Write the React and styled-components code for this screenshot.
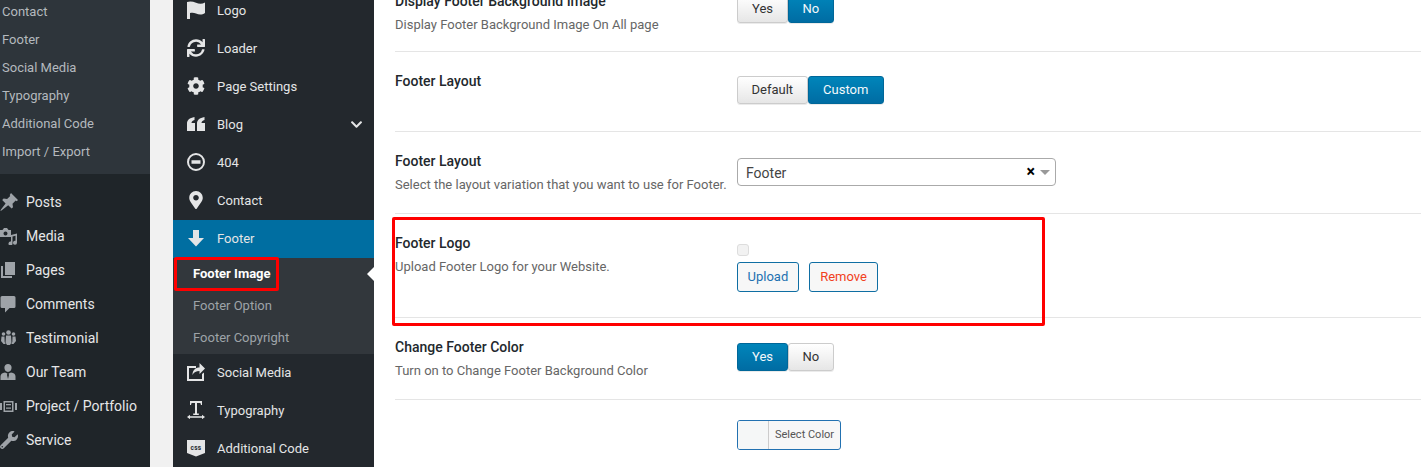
import React from 'react';
import styled, { createGlobalStyle } from 'styled-components';
import { FaWrench, FaSync, FaCog, FaMapMarkerAlt, FaChevronDown } from 'react-icons/fa';

const GlobalStyle = createGlobalStyle`
  html, body { margin: 0; padding: 0; height: 100%; overflow: hidden; background: #fff; }
  body { font-family: Roboto, "Liberation Sans", sans-serif; }
  * { box-sizing: border-box; }
`;

const Page = styled.div`
  position: relative;
  display: flex;
  width: 1421px;
  height: 467px;
  overflow: hidden;
`;

const AdminMenu = styled.nav`
  width: 150px;
  flex: none;
  background: #1f2529;
  overflow: hidden;
`;

const AdminSub = styled.div`
  background: #2e353b;
  height: 174px;
  margin-bottom: 11px;
`;

const AdminSubItem = styled.div`
  height: 28px;
  line-height: 23px;
  padding-left: 2px;
  font-size: 13px;
  color: #b4b9be;
`;

const AdminItem = styled.div`
  display: flex;
  align-items: center;
  height: 34px;
  font-size: 14px;
  color: #e6e7e8;
  white-space: nowrap;
`;

const AdminIcon = styled.span`
  display: flex;
  justify-content: center;
  width: 18px;
  margin-right: 8px;
  font-size: 18px;
  color: #9ea3a8;
`;

const Gutter = styled.div`
  width: 23px;
  flex: none;
  background: #f1f1f1;
`;

const OptionsMenu = styled.nav`
  width: 201px;
  flex: none;
  background: #23282d;
  overflow: hidden;
`;

const MenuItem = styled.div`
  display: flex;
  align-items: center;
  height: 38px;
  padding: ${p => (p.$active ? '0 11px 2px 14px' : '0 11px 0 14px')};
  margin-top: ${p => (p.$active ? '1px' : '0')};
  font-size: 13px;
  color: #e4e5e6;
  background: ${p => (p.$active ? '#006ea1' : 'transparent')};
  &:first-child { margin-top: -9px; }
`;

const MenuIcon = styled.span`
  display: flex;
  justify-content: center;
  width: 18px;
  margin-right: 12px;
  font-size: 18px;
  color: #e4e5e6;
`;

const Chevron = styled.span`
  display: flex;
  margin-left: auto;
  font-size: 13px;
`;

const SubMenu = styled.div`
  background: #32373c;
  height: 96px;
  margin-bottom: -1px;
`;

const SubItem = styled.div`
  position: relative;
  height: 32px;
  line-height: 31px;
  padding-left: 20px;
  font-size: 13px;
  font-weight: ${p => (p.$current ? 700 : 400)};
  color: ${p => (p.$current ? '#fff' : '#9ea3a8')};
`;

const CurrentArrow = styled.span`
  position: absolute;
  right: 0;
  top: 9px;
  border: 7px solid transparent;
  border-right-color: #fff;
  border-left-width: 0;
`;

const Content = styled.main`
  flex: 1;
  padding-left: 21px;
  margin-top: -29px;
`;

const Row = styled.section`
  display: grid;
  grid-template-columns: 342px 1fr;
  height: ${p => p.$h}px;
  border-bottom: ${p => (p.$last ? 'none' : '1px solid #e5e5e5')};
  padding-top: ${p => p.$top}px;
`;

const Text = styled.div`
  padding-top: 1px;
`;

const Title = styled.h3`
  margin: 0 0 7px;
  font-size: 14px;
  line-height: 18px;
  font-weight: 500;
  color: #23282d;
`;

const Desc = styled.p`
  margin: 0;
  font-size: 13px;
  line-height: 16px;
  color: #666;
  white-space: nowrap;
`;

const Control = styled.div`
  padding-top: ${p => p.$top || 0}px;
`;

const Toggle = styled.div`
  display: inline-flex;
  height: 28px;
`;

const ToggleButton = styled.button`
  height: 28px;
  padding: 0 ${p => p.$pad || 14}px 1px;
  font: 13px Roboto, sans-serif;
  border-radius: 3px;
  border: 1px solid ${p => (p.$on ? '#006799' : '#ccc')};
  color: ${p => (p.$on ? '#f4f8fb' : '#333')};
  background: ${p => (p.$on
    ? 'linear-gradient(#0085ba, #006ca3)'
    : 'linear-gradient(#fff, #e6e6e6)')};
  box-shadow: 0 1px 0 rgba(0, 0, 0, 0.08);
`;

const Select = styled.div`
  display: flex;
  align-items: center;
  width: 319px;
  height: 28px;
  padding: 0 5px 0 8px;
  border: 1px solid #aaa;
  border-radius: 4px;
  font-size: 14px;
  color: #444;
`;

const SelectValue = styled.span`
  padding-top: 2px;
`;

const Clear = styled.span`
  margin-left: auto;
  font-size: 16px;
  line-height: 1;
  font-weight: 700;
  color: #000;
`;

const Caret = styled.span`
  margin-left: 5px;
  border: 5px solid transparent;
  border-top-color: #999;
  border-bottom-width: 0;
`;

const Check = styled.span`
  display: block;
  width: 12px;
  height: 12px;
  margin-bottom: 6px;
  background: #f2f2f2;
  border: 1px solid #ddd;
  border-radius: 3px;
`;

const Actions = styled.div`
  display: flex;
  gap: 10px;
`;

const OutlineButton = styled.button`
  height: 30px;
  padding: 0 ${p => p.$pad || 10}px 1px;
  font: 13px Roboto, sans-serif;
  background: #f7f7f7;
  border: 1px solid #0f6ea3;
  border-radius: 3px;
  color: ${p => p.$color || '#2271b1'};
`;

const ColorButton = styled.div`
  display: inline-flex;
  height: 30px;
  background: #f7f7f7;
  border: 1px solid #2271b1;
  border-radius: 3px;
  overflow: hidden;
`;

const Swatch = styled.span`
  width: 31px;
  background: #f5f7f7;
  border-right: 1px solid #ccc;
`;

const ColorLabel = styled.span`
  padding: 0 6px;
  font-size: 11px;
  line-height: 28px;
  color: #555;
`;

const Callout = styled.div`
  position: absolute;
  left: ${p => p.$x}px;
  top: ${p => p.$y}px;
  width: ${p => p.$w}px;
  height: ${p => p.$h}px;
  border: 3px solid #f00;
  border-radius: 2px;
  pointer-events: none;
`;

const Svg = styled.svg`
  display: block;
  width: 1em;
  height: 1em;
  fill: currentColor;
`;

const Icon = ({ d, box = 18, children }) => (
  <Svg viewBox={`0 0 ${box} ${box}`}>
    {d && <path fillRule="evenodd" d={d} />}
    {children}
  </Svg>
);

const PinIcon = () => <Icon d="M11 0l7 7-1.3 1.2-1-.6-3.2 3.2.5 3.4-1.4 1.4-3.4-3.4L1.5 17.5.4 18l.4-1.2 4.8-6.4L2.2 7l1.4-1.4 3.5.5 3.1-3.2-.5-1z" />;
const MediaIcon = () => (
  <Icon>
    <path fillRule="evenodd" d="M1 4h2.5L5 2h3l1.5 2H12v7H1zm5.5 1.6a2 2 0 1 0 0 4 2 2 0 0 0 0-4z" transform="translate(-1 -1)" />
    <path d="M11 7.5l6-1.5v9.2a2 2 0 1 1-1.5-1.9V8.2L12.5 9v7a2 2 0 1 1-1.5-1.9z" transform="translate(0 .5)" />
  </Icon>
);
const PagesIcon = () => <Icon d="M5 1h10v13H5zM1 5h2v10h9v2H1z" />;
const CommentIcon = () => <Icon d="M2 1h12a1.500 1.500 0 0 1 1.500 1.500v9A1.500 1.500 0 0 1 14 13H9.500L5 17.500V13H2A1.500 1.500 0 0 1 .5 11.500v-9A1.500 1.500 0 0 1 2 1z" />;
const PeopleIcon = () => (
  <Icon>
    <circle cx="8.500" cy="3.500" r="2.300" />
    <circle cx="3.500" cy="5" r="1.800" />
    <circle cx="13.500" cy="5" r="1.800" />
    <path d="M6 6.500h5l.5 7-1.500 2.500H7l-1.500-2.500zM1.500 7.500h3l.2 5.500 1 2H3.500l-2.500-3zM12.500 7.500h3l.5 4.500-2.500 3h-2.200l1-2z" />
  </Icon>
);
const TeamIcon = () => <Icon d="M8 1a3.600 3.600 0 0 1 3.600 3.800c0 2.200-1.500 4.200-3.600 4.200S4.400 7 4.400 4.800A3.600 3.600 0 0 1 8 1zM5 9.500l2.400 1L7 12l1 4h0l1-4-.4-1.500 2.400-1c3 .5 4.500 1.500 4.500 4V17H.500v-3.500c0-2.500 1.500-3.500 4.500-4z" />;
const ProjectIcon = () => <Icon d="M0 6h2v7H0zM15 6h2v7h-2zM3.500 4h10v11h-10zm1.500 1.500v8h7v-8zM6 7h5v1.200H6zM6 10.500h5v1.200H6z" />;
const FlagIcon = () => <Icon d="M0 1c3-1 6-.500 9 .800 3 1.200 6 1.500 9-.300v10.500c-3 2-6 1.800-9 .500-2.200-1-4-1-6-.500V18H0z" />;
const QuoteIcon = () => <Icon d="M0 16V8.500C0 5 2.500 3 7.500 2v3C5.500 5.500 4.500 6.500 4.500 8H8v8zM10 16V8.500C10 5 12.500 3 17.500 2v3c-2 .5-3 1.500-3 3H18v8z" />;
const NoEntryIcon = () => <Icon d="M9 0a9 9 0 1 0 0 18A9 9 0 0 0 9 0zm0 2a7 7 0 1 1 0 14A7 7 0 0 1 9 2zM4.500 7.200h9v3.600h-9z" />;
const DownIcon = () => <Icon d="M6 1h6v8h5l-8 8.500L1 9h5z" />;
const ShareIcon = () => <Icon d="M0 3h9v2H2v11h13v-5l2-1.500V18H0zM12.500 0L18 5.500 12.500 11V8C9 8 7 9 5.500 12c0-5 3-7.500 7-7.500z" />;
const TypeIcon = () => <Icon d="M3 0h12v4h-1l-.6-2H10v10.500h1.800V14H6.200v-1.500H8V2H4.600L4 4H3zM0 16l3-2.200v1.500h12v-1.500l3 2.200-3 2.200v-1.500H3v1.500z" />;

const CssIcon = () => (
  <Icon d="M0 1h18v13l-9 3.500L0 14z">
    <text x="9" y="10.500" textAnchor="middle" fontSize="6.500" fontWeight="700" letterSpacing=".3" fontFamily="Roboto, sans-serif" fill="#23282d">css</text>
  </Icon>
);

const adminSub = ['Contact', 'Footer', 'Social Media', 'Typography', 'Additional Code', 'Import / Export'];

const adminItems = [
  ['Posts', <PinIcon />],
  ['Media', <MediaIcon />],
  ['Pages', <PagesIcon />],
  ['Comments', <CommentIcon />],
  ['Testimonial', <PeopleIcon />],
  ['Our Team', <TeamIcon />],
  ['Project / Portfolio', <ProjectIcon />],
  ['Service', <FaWrench />]
];

export default function App() {
  return (
    <Page>
      <GlobalStyle />
      <AdminMenu>
        <AdminSub>
          {adminSub.map(label => <AdminSubItem key={label}>{label}</AdminSubItem>)}
        </AdminSub>
        {adminItems.map(([label, icon]) => (
          <AdminItem key={label}><AdminIcon>{icon}</AdminIcon>{label}</AdminItem>
        ))}
      </AdminMenu>
      <Gutter />
      <OptionsMenu>
        <MenuItem><MenuIcon><FlagIcon /></MenuIcon>Logo</MenuItem>
        <MenuItem><MenuIcon><FaSync /></MenuIcon>Loader</MenuItem>
        <MenuItem><MenuIcon><FaCog /></MenuIcon>Page Settings</MenuItem>
        <MenuItem>
          <MenuIcon><QuoteIcon /></MenuIcon>Blog
          <Chevron><FaChevronDown /></Chevron>
        </MenuItem>
        <MenuItem><MenuIcon><NoEntryIcon /></MenuIcon>404</MenuItem>
        <MenuItem><MenuIcon><FaMapMarkerAlt /></MenuIcon>Contact</MenuItem>
        <MenuItem $active><MenuIcon><DownIcon /></MenuIcon>Footer</MenuItem>
        <SubMenu>
          <SubItem $current>Footer Image<CurrentArrow /></SubItem>
          <SubItem>Footer Option</SubItem>
          <SubItem>Footer Copyright</SubItem>
        </SubMenu>
        <MenuItem><MenuIcon><ShareIcon /></MenuIcon>Social Media</MenuItem>
        <MenuItem><MenuIcon><TypeIcon /></MenuIcon>Typography</MenuItem>
        <MenuItem><MenuIcon><CssIcon /></MenuIcon>Additional Code</MenuItem>
      </OptionsMenu>
      <Content>
        <Row $h={81} $top={20}>
          <Text>
            <Title>Display Footer Background Image</Title>
            <Desc>Display Footer Background Image On All page</Desc>
          </Text>
          <Control $top={4}>
            <Toggle>
              <ToggleButton>Yes</ToggleButton>
              <ToggleButton $on $pad={13.5}>No</ToggleButton>
            </Toggle>
          </Control>
        </Row>
        <Row $h={80} $top={19}>
          <Text><Title>Footer Layout</Title></Text>
          <Control $top={5}>
            <Toggle>
              <ToggleButton $pad={13.5}>Default</ToggleButton>
              <ToggleButton $on $pad={14.5}>Custom</ToggleButton>
            </Toggle>
          </Control>
        </Row>
        <Row $h={82} $top={19}>
          <Text>
            <Title>Footer Layout</Title>
            <Desc>Select the layout variation that you want to use for Footer.</Desc>
          </Text>
          <Control $top={7}>
            <Select><SelectValue>Footer</SelectValue><Clear>×</Clear><Caret /></Select>
          </Control>
        </Row>
        <Row $h={104} $top={19}>
          <Text>
            <Title>Footer Logo</Title>
            <Desc>Upload Footer Logo for your Website.</Desc>
          </Text>
          <Control $top={11}>
            <Check />
            <Actions>
              <OutlineButton $pad={9.5}>Upload</OutlineButton>
              <OutlineButton $color="#f1401c" $pad={10.5}>Remove</OutlineButton>
            </Actions>
          </Control>
        </Row>
        <Row $h={82} $top={19}>
          <Text>
            <Title>Change Footer Color</Title>
            <Desc>Turn on to Change Footer Background Color</Desc>
          </Text>
          <Control $top={6}>
            <Toggle>
              <ToggleButton $on>Yes</ToggleButton>
              <ToggleButton $pad={13.5}>No</ToggleButton>
            </Toggle>
          </Control>
        </Row>
        <Row $h={80} $top={20} $last>
          <div />
          <Control>
            <ColorButton>
              <Swatch />
              <ColorLabel>Select Color</ColorLabel>
            </ColorButton>
          </Control>
        </Row>
      </Content>
      <Callout $x={174} $y={257} $w={105} $h={34} />
      <Callout $x={392} $y={217} $w={653} $h={109} />
    </Page>
  );
}
